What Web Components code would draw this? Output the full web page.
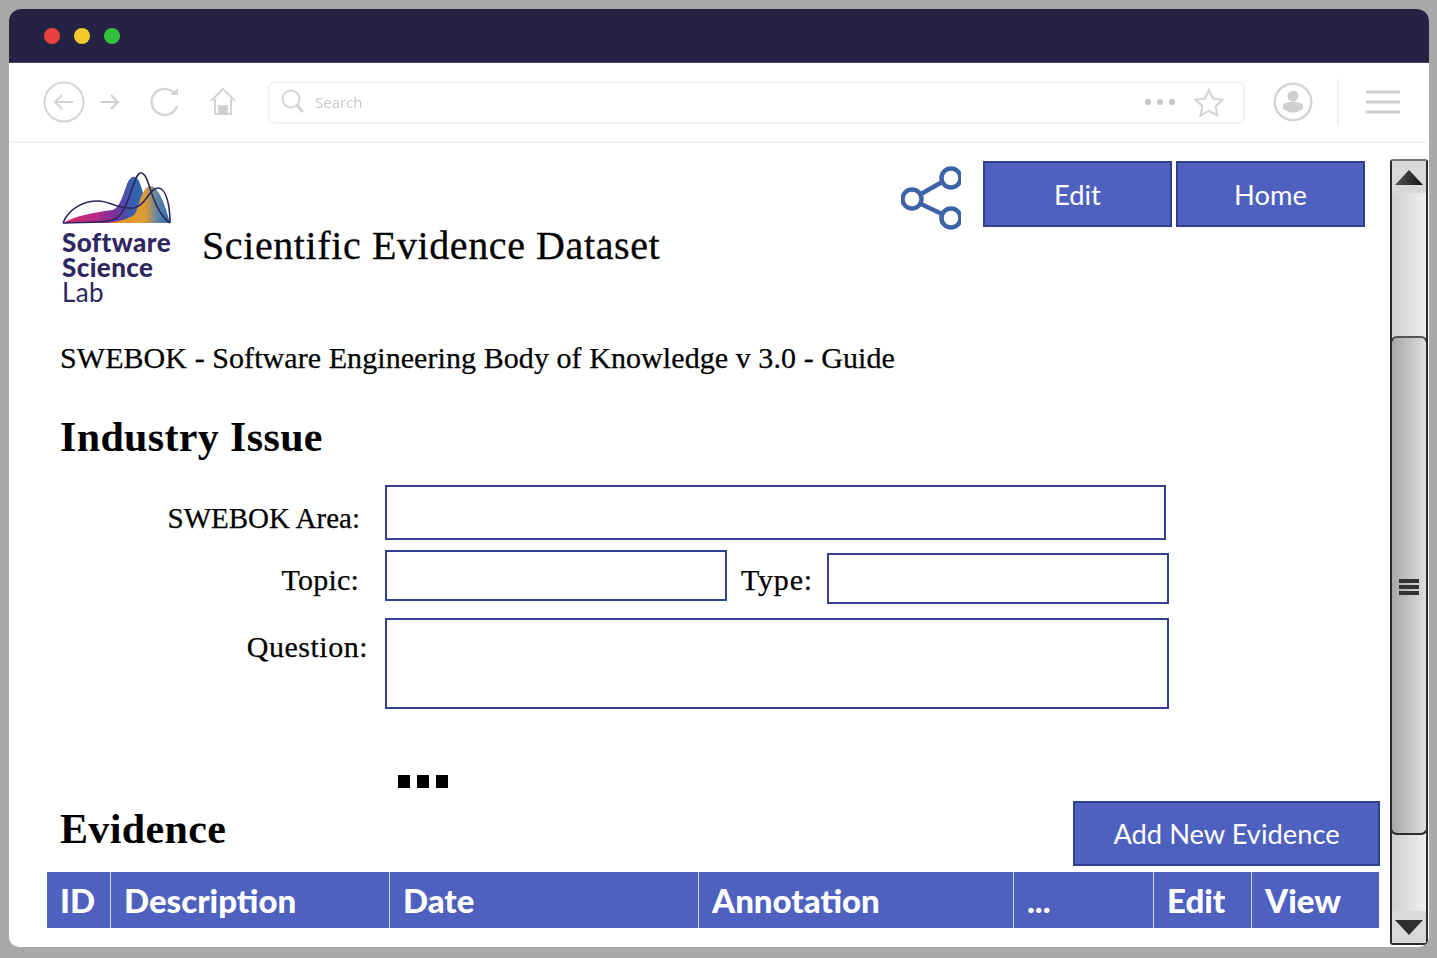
<!DOCTYPE html>
<html>
<head>
<meta charset="utf-8">
<title>Scientific Evidence Dataset</title>
<style>
html, body { margin: 0; height: 100%; background: #a9a9a9; }
body { padding: 9px 8px 11px 9px; box-sizing: border-box; font-family: "Liberation Serif", serif; overflow: hidden; }
</style>
</head>
<body>
<browser-window>
	<browser-toolbar></browser-toolbar>
	<div style="display:flex; flex:1; min-height:0">
		<div style="flex:1; min-width:0; padding:0 10px 0 38px">
			<page-header title="Scientific Evidence Dataset"></page-header>
			<page-subtitle>SWEBOK - Software Engineering Body of Knowledge v 3.0 - Guide</page-subtitle>
			<section-title style="margin-top:38px">Industry Issue</section-title>
			<issue-form></issue-form>
			<more-dots></more-dots>
			<evidence-bar></evidence-bar>
			<evidence-table></evidence-table>
		</div>
		<fake-scrollbar></fake-scrollbar>
	</div>
</browser-window>

<script>
class BrowserWindow extends HTMLElement {
	connectedCallback() {
		this.attachShadow({ mode: 'open' }).innerHTML = `
<style>
:host { display: flex; flex-direction: column; height: 100%; background: #fff; border-radius: 12px 12px 10px 10px; overflow: hidden; }
.title { height: 53px; flex: none; background: #252244; border-bottom: 1px solid #4a4870; display: flex; align-items: center; gap: 14px; padding-left: 35px; box-sizing: content-box; }
.dot { width: 16px; height: 16px; border-radius: 50%; filter: blur(.5px); }
</style>
<div class="title">
	<div class="dot" style="background:#e8403f"></div>
	<div class="dot" style="background:#f4c92b"></div>
	<div class="dot" style="background:#35c13f"></div>
</div>
<slot></slot>`
	}
}
customElements.define('browser-window', BrowserWindow)

class BrowserToolbar extends HTMLElement {
	connectedCallback() {
		this.attachShadow({ mode: 'open' }).innerHTML = `
<style>
:host { display: flex; flex: none; height: 78px; align-items: center; margin-right: 3px; border-bottom: 2px solid #f1f1f1; padding-left: 33px; font-family: "Open Sans", sans-serif; color: #c9c9c9; }
svg { display: block; flex: none; fill: none; stroke: #d4d4d4; stroke-width: 2; filter: blur(.4px); }
.search { width: 962px; height: 39px; margin-left: 31px; border: 2px solid #f3f3f3; border-radius: 7px; display: flex; align-items: center; padding-left: 11px; flex: none; }
.search span { font-size: 15px; margin-left: 10px; flex: 1; filter: blur(.4px); }
.sep { width: 2px; height: 46px; background: #efefef; margin-left: 24px; }
</style>
<svg width="44" height="44" viewBox="0 0 44 44"><circle cx="22" cy="22" r="19.500"/><path d="M31 22H13M20 15l-7 7 7 7"/></svg>
<svg width="20" height="16" viewBox="0 0 20 16" style="margin-left:14px;stroke:#cfcfcf"><path d="M1 8h17M11 1l7 7-7 7"/></svg>
<svg width="32" height="32" viewBox="0 0 32 32" style="margin-left:30px;stroke-width:2.400"><path d="M25 8A13 13 0 1 0 27 20"/><path d="M20 9h8V2z" fill="#d4d4d4" stroke="none"/></svg>
<svg width="28" height="30" viewBox="0 0 28 30" style="margin-left:27px"><path d="M2 14L14 2l12 12M6 12v15h16V12"/><path d="M10 27v-8h8v8" fill="#cfcfcf"/></svg>
<div class="search">
	<svg width="24" height="26" viewBox="0 0 24 26"><circle cx="10" cy="10" r="8.500"/><path d="M16 16l6 7" stroke-width="3"/></svg>
	<span>Search</span>
	<svg width="30" height="6" viewBox="0 0 30 6" style="stroke:none;fill:#c4c4c4"><circle cx="3" cy="3" r="3"/><circle cx="15" cy="3" r="3"/><circle cx="27" cy="3" r="3"/></svg>
	<svg width="30" height="29" viewBox="0 0 30 29" style="margin:0 19px 0 19px"><path d="M15 2l4 8.500 9.500 1.200-7 6.500 2 9.300-8.500-4.700-8.500 4.700 2-9.300-7-6.500L11 10.500z"/></svg>
</div>
<svg width="40" height="40" viewBox="0 0 40 40" style="margin-left:28px"><circle cx="20" cy="20" r="18.300" stroke-width="2.500"/><circle cx="20" cy="14" r="5.500" fill="#cfcfcf" stroke="none"/><path d="M10 22q10-5 20 0v5q-10 7-20 0z" fill="#cfcfcf" stroke="none"/></svg>
<div class="sep"></div>
<svg width="34" height="24" viewBox="0 0 34 24" style="margin-left:27px;stroke:#cdcdcd;stroke-width:3"><path d="M0 2h34M0 12h34M0 22h34"/></svg>`
	}
}
customElements.define('browser-toolbar', BrowserToolbar)

class LogoMark extends HTMLElement {
	connectedCallback() {
		this.attachShadow({ mode: 'open' }).innerHTML = `
<style>
:host { display: block; width: 116px; color: #2e2660; font-family: Lato, sans-serif; }
svg { display: block; overflow: visible; }
.t { font-size: 26px; line-height: 25px; font-weight: 900; margin-left: 1px; letter-spacing: .4px; }
.l { font-weight: 400; letter-spacing: .4px; }
</style>
<svg width="116" height="52" viewBox="61 172 116 52">
	<defs>
		<linearGradient id="a" gradientUnits="userSpaceOnUse" x1="63" x2="140" y1="0" y2="0">
			<stop offset="0" stop-color="#dc2a68"/><stop offset=".42" stop-color="#b52a85"/><stop offset=".68" stop-color="#7a309c"/><stop offset=".85" stop-color="#3f58ac"/><stop offset="1" stop-color="#2f66b0"/>
		</linearGradient>
		<linearGradient id="c" gradientUnits="userSpaceOnUse" x1="108" x2="170" y1="0" y2="0">
			<stop offset="0" stop-color="#e89a24"/><stop offset=".6" stop-color="#dd9a34"/><stop offset=".8" stop-color="#5e86a8"/><stop offset="1" stop-color="#2f66b0"/>
		</linearGradient>
	</defs>
	<path d="M63 223C75 216 95 212 113 210C120 207 123 195 127 184C130 176 136 174 139 181C143 190 146 205 150 223Z" fill="url(#a)"/>
	<path d="M108 223C122 221 131 218 135 214C138 208 140 198 143 193C146 186 151 184 155 188C161 194 165 205 170 223Z" fill="url(#c)"/>
	<path d="M63 223C69 208 84 201 98 201C110 201 116 208 128 208C146 210 148 188 158 188C167 188 170 208 170 223" fill="none" stroke="#2e2660" stroke-width="1.600"/>
	<path d="M63 223C85 222 100 223 112 220C130 216 132 173 141 173C150 173 150 208 170 223" fill="none" stroke="#2e2660" stroke-width="1.600"/>
</svg>
<div class="t" style="margin-top:6px">Software</div>
<div class="t">Science</div>
<div class="t l">Lab</div>`
	}
}
customElements.define('logo-mark', LogoMark)

class AppButton extends HTMLElement {
	connectedCallback() {
		this.attachShadow({ mode: 'open' }).innerHTML = `
<style>
:host { display: flex; align-items: center; justify-content: center; box-sizing: border-box; background: #4f61bf; border: 2px solid #30408f; color: #fff; font-family: Lato, sans-serif; font-size: 27.300px; }
</style>
<slot></slot>`
	}
}
customElements.define('app-button', AppButton)

class PageHeader extends HTMLElement {
	connectedCallback() {
		this.attachShadow({ mode: 'open' }).innerHTML = `
<style>
:host { display: flex; align-items: flex-start; padding: 18px 15px 0 14px; height: 172px; box-sizing: border-box; }
logo-mark { margin-top: 11px; flex: none; }
h1 { margin: 63px 0 0 25px; font-size: 40px; line-height: 44px; font-weight: 400; flex: 1; color: #000; letter-spacing: .6px; -webkit-text-stroke: .3px #000; }
svg { display: block; flex: none; margin: 5px 22px 0 0; }
app-button { width: 189px; height: 66px; flex: none; }
app-button + app-button { margin-left: 4px; }
</style>
<logo-mark></logo-mark>
<h1>${this.getAttribute('title')}</h1>
<svg width="60" height="64" viewBox="0 0 60 64" fill="none" stroke="#3e62a8" stroke-width="4.500">
	<circle cx="50" cy="12" r="9.500"/><circle cx="11" cy="33" r="9.500"/><circle cx="50" cy="52" r="9.500"/>
	<path d="M20 28l21-12M20 38l21 10"/>
</svg>
<app-button>Edit</app-button>
<app-button>Home</app-button>`
	}
}
customElements.define('page-header', PageHeader)

class PageSubtitle extends HTMLElement {
	connectedCallback() {
		this.attachShadow({ mode: 'open' }).innerHTML = `
<style>
:host { display: block; padding: 25px 0 0 13px; font-size: 30px; line-height: 36px; color: #000; letter-spacing: .07px; -webkit-text-stroke: .25px #000; }
</style>
<slot></slot>`
	}
}
customElements.define('page-subtitle', PageSubtitle)

class SectionTitle extends HTMLElement {
	connectedCallback() {
		this.attachShadow({ mode: 'open' }).innerHTML = `
<style>
:host { display: block; padding-left: 13px; font-size: 42px; line-height: 46px; font-weight: 700; color: #000; letter-spacing: .35px; }
</style>
<slot></slot>`
	}
}
customElements.define('section-title', SectionTitle)

class IssueForm extends HTMLElement {
	connectedCallback() {
		this.attachShadow({ mode: 'open' }).innerHTML = `
<style>
:host { display: block; font-size: 30px; color: #000; padding-top: 25px; -webkit-text-stroke: .25px #000; }
.row { display: flex; align-items: flex-start; }
.lab { box-sizing: border-box; width: 338px; text-align: right; flex: none; line-height: 36px; }
.box { border: 2px solid #33408f; box-sizing: border-box; background: #fff; flex: none; }
</style>
<div class="row">
	<div class="lab" style="padding-right:25px;padding-top:15px;font-size:29px">SWEBOK Area:</div>
	<div class="box" style="width:781px;height:55px"></div>
</div>
<div class="row" style="margin-top:10px">
	<div class="lab" style="padding-right:26px;padding-top:12px;letter-spacing:.2px">Topic:</div>
	<div class="box" style="width:342px;height:51px"></div>
	<div class="lab" style="width:auto;margin-left:14px;padding-top:12px;letter-spacing:.8px">Type:</div>
	<div class="box" style="width:342px;height:51px;margin:3px 0 0 14px"></div>
</div>
<div class="row" style="margin-top:17px">
	<div class="lab" style="padding-right:17px;padding-top:8px;letter-spacing:.5px">Question:</div>
	<div class="box" style="width:784px;height:91px;margin-top:-3px"></div>
</div>`
	}
}
customElements.define('issue-form', IssueForm)

class MoreDots extends HTMLElement {
	connectedCallback() {
		this.attachShadow({ mode: 'open' }).innerHTML = `
<style>
:host { display: flex; gap: 7px; padding: 66px 0 0 351px; }
i { width: 12px; height: 13px; background: #000; }
</style>
<i></i><i></i><i></i>`
	}
}
customElements.define('more-dots', MoreDots)

class EvidenceBar extends HTMLElement {
	connectedCallback() {
		this.attachShadow({ mode: 'open' }).innerHTML = `
<style>
:host { display: flex; justify-content: space-between; align-items: flex-end; margin-top: 13px; }
section-title { margin-bottom: 14px; }
app-button { width: 307px; height: 65px; }
</style>
<section-title>Evidence</section-title>
<app-button>Add New Evidence</app-button>`
	}
}
customElements.define('evidence-bar', EvidenceBar)

class EvidenceTable extends HTMLElement {
	connectedCallback() {
		this.attachShadow({ mode: 'open' }).innerHTML = `
<style>
:host { display: grid; grid-template-columns: 62.500px 277.500px 307.500px 313.500px 138.500px 96.500px 127px; column-gap: 1.500px; height: 56px; margin-top: 6px; font-family: Lato, sans-serif; font-size: 33px; font-weight: 900; color: #fff; background: #c9cfee; box-sizing: border-box; width: 1332px; }
div { background: #4f61bf; padding-left: 13px; display: flex; align-items: center; }
</style>
<div>ID</div><div>Description</div><div>Date</div><div>Annotation</div><div>...</div><div>Edit</div><div>View</div>`
	}
}
customElements.define('evidence-table', EvidenceTable)

class FakeScrollbar extends HTMLElement {
	connectedCallback() {
		this.attachShadow({ mode: 'open' }).innerHTML = `
<style>
:host { display: flex; flex-direction: column; flex: none; width: 38px; box-sizing: border-box; margin: 16px 1px 2px 0; border: 2px solid #2b2b2b; border-top-color: #777; border-radius: 3px; background: linear-gradient(90deg, #cfcfcf, #efefef); }
.end { height: 32px; background: #d9d9d9; flex: none; display: flex; align-items: center; justify-content: center; }
.thumb { flex: none; height: 499px; margin: 143px -2px 0; box-sizing: border-box; border: 2px solid #2b2b2b; border-top-color: #555; border-radius: 7px; background: linear-gradient(90deg, #a8a8a8, #dedede); display: flex; flex-direction: column; align-items: center; justify-content: center; gap: 2px; padding-top: 3px; }
.thumb i { display: block; width: 20px; height: 4px; background: #333; }
.gap { flex: 1; }
svg { display: block; }
</style>
<div class="end"><svg width="28" height="15" viewBox="0 0 28 15"><defs><linearGradient id="g" x1="0" x2="1" y1="0" y2="0"><stop offset="0" stop-color="#555"/><stop offset="1" stop-color="#111"/></linearGradient></defs><path d="M14 0L28 15H0z" fill="url(#g)"/></svg></div>
<div class="thumb"><i></i><i></i><i></i></div>
<div class="gap"></div>
<div class="end"><svg width="28" height="15" viewBox="0 0 28 15"><path d="M0 0H28L14 15z" fill="#2e2e2e"/></svg></div>`
	}
}
customElements.define('fake-scrollbar', FakeScrollbar)
</script>
</body>
</html>
